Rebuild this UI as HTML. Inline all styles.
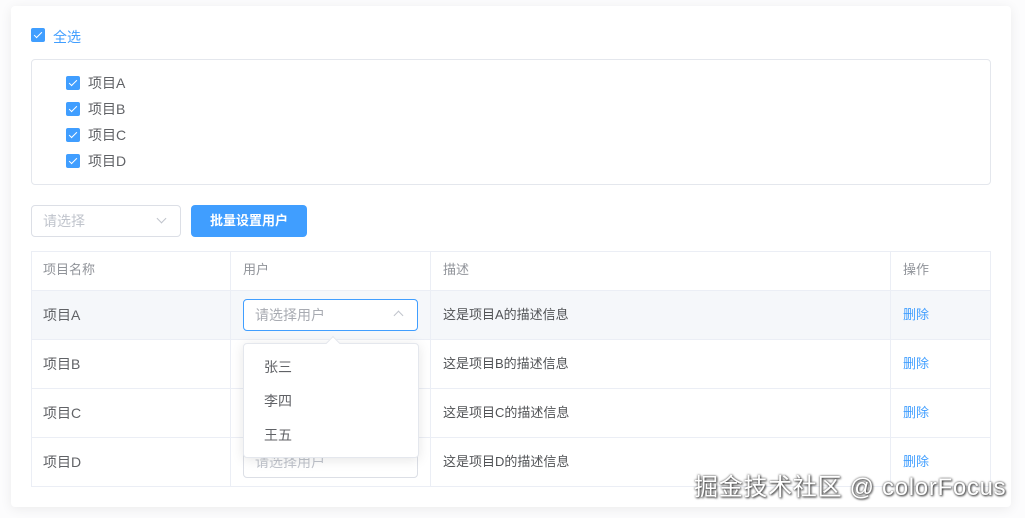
<!DOCTYPE html>
<html><head><meta charset="utf-8"><style>
*{box-sizing:border-box;margin:0;padding:0}
body{width:1025px;height:518px;background:#fcfcfd;font-family:"Liberation Sans","Noto Sans CJK SC",sans-serif;font-size:14px;color:#606266;position:relative;overflow:hidden}
.card{position:absolute;left:11px;top:6px;width:1000px;height:501px;background:#fff;border-radius:4px;box-shadow:0 2px 12px rgba(0,0,0,.07)}
.abs{position:absolute}
.cb{position:absolute;width:14px;height:14px;background:#409eff;border-radius:2px}
.cb:after{content:"";position:absolute;left:4.5px;top:1.5px;width:3px;height:7px;border:solid #fff;border-width:0 1.5px 1.5px 0;transform:rotate(45deg)}
.t{position:absolute;line-height:20px}
.box{position:absolute;border:1px solid #dcdfe6;border-radius:4px}
.line{position:absolute;background:#ebeef5}
.del{color:#409eff;font-size:13px}
.arrow{position:absolute;width:7px;height:7px;border:solid #c0c4cc;border-width:0 1px 1px 0}
.d{font-size:13px;color:#505255}
</style></head><body>
<div class="card"></div>
<div class="cb" style="left:31px;top:28px"></div><div class="t" style="left:53px;top:27px;color:#409eff">全选</div>
<div class="box" style="left:31px;top:59px;width:960px;height:126px;border-color:#e4e7ed"></div>
<div class="cb" style="left:66px;top:76px"></div><div class="t" style="left:88px;top:73px">项目A</div>
<div class="cb" style="left:66px;top:102px"></div><div class="t" style="left:88px;top:99px">项目B</div>
<div class="cb" style="left:66px;top:128px"></div><div class="t" style="left:88px;top:125px">项目C</div>
<div class="cb" style="left:66px;top:154px"></div><div class="t" style="left:88px;top:151px">项目D</div>
<div class="box" style="left:31px;top:205px;width:150px;height:32px"></div>
<div class="t" style="left:43px;top:211px;color:#c0c4cc">请选择</div>
<div class="arrow" style="left:158px;top:215px;transform:rotate(45deg)"></div>
<div class="abs" style="left:191px;top:205px;width:116px;height:32px;background:#409eff;border-radius:4px;color:#fff;font-size:13px;font-weight:bold;text-align:center;line-height:32px">批量设置用户</div>
<div class="abs" style="left:31px;top:251px;width:960px;height:236px;border:1px solid #ebeef5"></div>
<div class="abs" style="left:32px;top:291px;width:958px;height:48px;background:#f5f7fa"></div>
<div class="line" style="left:31px;top:290px;width:960px;height:1px"></div>
<div class="line" style="left:31px;top:339px;width:960px;height:1px"></div>
<div class="line" style="left:31px;top:388px;width:960px;height:1px"></div>
<div class="line" style="left:31px;top:437px;width:960px;height:1px"></div>
<div class="line" style="left:230px;top:251px;width:1px;height:236px"></div>
<div class="line" style="left:430px;top:251px;width:1px;height:236px"></div>
<div class="line" style="left:890px;top:251px;width:1px;height:236px"></div>
<div class="t" style="left:43px;top:260px;color:#909399;font-size:13px">项目名称</div>
<div class="t" style="left:243px;top:260px;color:#909399;font-size:13px">用户</div>
<div class="t" style="left:443px;top:260px;color:#909399;font-size:13px">描述</div>
<div class="t" style="left:903px;top:260px;color:#909399;font-size:13px">操作</div>
<div class="t" style="left:43px;top:305px">项目A</div>
<div class="t" style="left:43px;top:354px">项目B</div>
<div class="t" style="left:43px;top:403px">项目C</div>
<div class="t" style="left:43px;top:452px">项目D</div>
<div class="t d" style="left:443px;top:305px">这是项目A的描述信息</div>
<div class="t d" style="left:443px;top:354px">这是项目B的描述信息</div>
<div class="t d" style="left:443px;top:403px">这是项目C的描述信息</div>
<div class="t d" style="left:443px;top:452px">这是项目D的描述信息</div>
<div class="t del" style="left:903px;top:305px">删除</div>
<div class="t del" style="left:903px;top:354px">删除</div>
<div class="t del" style="left:903px;top:403px">删除</div>
<div class="t del" style="left:903px;top:452px">删除</div>
<div class="box" style="left:243px;top:299px;width:175px;height:32px;border-color:#409eff;background:#fff"></div>
<div class="t" style="left:255px;top:305px;color:#a8abb2">请选择用户</div>
<div class="arrow" style="left:395px;top:312px;transform:rotate(-135deg)"></div>
<div class="box" style="left:243px;top:446px;width:175px;height:32px"></div>
<div class="t" style="left:255px;top:452px;color:#c0c4cc">请选择用户</div>
<div class="abs" style="left:243px;top:343px;width:176px;height:115px;background:#fff;border:1px solid #e4e7ed;border-radius:4px;box-shadow:0 2px 12px rgba(0,0,0,.1)"></div>
<div class="abs" style="left:328px;top:338px;width:10px;height:10px;background:#fff;border-left:1px solid #e4e7ed;border-top:1px solid #e4e7ed;transform:rotate(45deg)"></div>
<div class="t" style="left:264px;top:357px">张三</div>
<div class="t" style="left:264px;top:391px">李四</div>
<div class="t" style="left:264px;top:425px">王五</div>
<div class="t" style="left:694px;top:473px;font-size:24px;letter-spacing:0.7px;line-height:30px;color:#fff;text-shadow:0 0 2px #444,1px 1px 2px #333">掘金技术社区 @ colorFocus</div>
</body></html>
